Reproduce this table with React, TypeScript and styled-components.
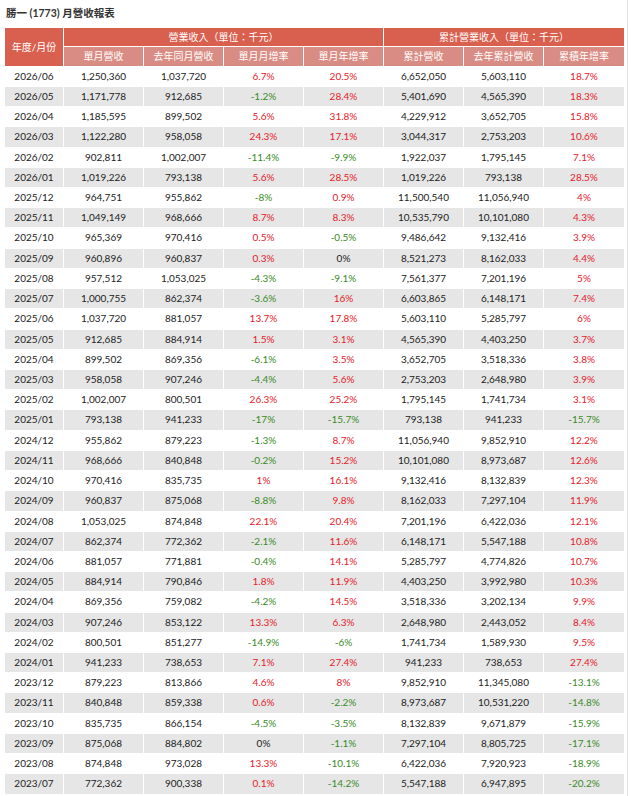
import React from "react";
import styled, { createGlobalStyle } from "styled-components";

const Global = createGlobalStyle`
  html, body { margin: 0; padding: 0; background: #fff; }
  body { font-family: Lato, "Noto Sans CJK TC", sans-serif; color: #222; }
`;

const Page = styled.div`
  width: 628px;
  min-height: 796px;
  box-sizing: border-box;
  border-right: 1px solid #e2e2e2;
  padding: 0 0 0 5px;
`;

const Title = styled.h1`
  margin: 0;
  padding: 0 0 0 1px;
  height: 28px;
  line-height: 27px;
  font-size: 10.5px;
  font-weight: 700;
  color: #333;
  font-family: Lato, "Noto Sans CJK TC", sans-serif;
`;

const Table = styled.table`
  border-collapse: separate;
  border-spacing: 0;
  table-layout: fixed;
  width: 619px;
  font-size: 10px;
`;

const HeadCell = styled.th<{ $tone: "dark" | "light" }>`
  background: ${(p) => (p.$tone === "dark" ? "#d9604f" : "#d98c83")};
  color: #fff;
  font-weight: 400;
  padding: 0;
  line-height: 18.35px;
  text-align: center;
  border-right: 1px solid #fff;
  border-bottom: 1px solid #fff;
  white-space: nowrap;
  &:last-child { border-right: none; }
`;

const Row = styled.tr<{ $alt: boolean }>`
  background: ${(p) => (p.$alt ? "#e6e6e6" : "#fff")};
`;

const Cell = styled.td<{ $tone?: "up" | "down" | "flat" }>`
  padding: 0;
  line-height: 19.22px;
  text-align: center;
  border-right: 1px solid #fff;
  border-bottom: 1px solid #fff;
  white-space: nowrap;
  color: ${(p) =>
    p.$tone === "up" ? "#e5202a" : p.$tone === "down" ? "#3a8a26" : "#222"};
  &:last-child { border-right: none; }
`;

type R = [string, string, string, string, string, string, string, string];

const rows: R[] = [
  ["2026/06", "1,250,360", "1,037,720", "6.7%", "20.5%", "6,652,050", "5,603,110", "18.7%"],
  ["2026/05", "1,171,778", "912,685", "-1.2%", "28.4%", "5,401,690", "4,565,390", "18.3%"],
  ["2026/04", "1,185,595", "899,502", "5.6%", "31.8%", "4,229,912", "3,652,705", "15.8%"],
  ["2026/03", "1,122,280", "958,058", "24.3%", "17.1%", "3,044,317", "2,753,203", "10.6%"],
  ["2026/02", "902,811", "1,002,007", "-11.4%", "-9.9%", "1,922,037", "1,795,145", "7.1%"],
  ["2026/01", "1,019,226", "793,138", "5.6%", "28.5%", "1,019,226", "793,138", "28.5%"],
  ["2025/12", "964,751", "955,862", "-8%", "0.9%", "11,500,540", "11,056,940", "4%"],
  ["2025/11", "1,049,149", "968,666", "8.7%", "8.3%", "10,535,790", "10,101,080", "4.3%"],
  ["2025/10", "965,369", "970,416", "0.5%", "-0.5%", "9,486,642", "9,132,416", "3.9%"],
  ["2025/09", "960,896", "960,837", "0.3%", "0%", "8,521,273", "8,162,033", "4.4%"],
  ["2025/08", "957,512", "1,053,025", "-4.3%", "-9.1%", "7,561,377", "7,201,196", "5%"],
  ["2025/07", "1,000,755", "862,374", "-3.6%", "16%", "6,603,865", "6,148,171", "7.4%"],
  ["2025/06", "1,037,720", "881,057", "13.7%", "17.8%", "5,603,110", "5,285,797", "6%"],
  ["2025/05", "912,685", "884,914", "1.5%", "3.1%", "4,565,390", "4,403,250", "3.7%"],
  ["2025/04", "899,502", "869,356", "-6.1%", "3.5%", "3,652,705", "3,518,336", "3.8%"],
  ["2025/03", "958,058", "907,246", "-4.4%", "5.6%", "2,753,203", "2,648,980", "3.9%"],
  ["2025/02", "1,002,007", "800,501", "26.3%", "25.2%", "1,795,145", "1,741,734", "3.1%"],
  ["2025/01", "793,138", "941,233", "-17%", "-15.7%", "793,138", "941,233", "-15.7%"],
  ["2024/12", "955,862", "879,223", "-1.3%", "8.7%", "11,056,940", "9,852,910", "12.2%"],
  ["2024/11", "968,666", "840,848", "-0.2%", "15.2%", "10,101,080", "8,973,687", "12.6%"],
  ["2024/10", "970,416", "835,735", "1%", "16.1%", "9,132,416", "8,132,839", "12.3%"],
  ["2024/09", "960,837", "875,068", "-8.8%", "9.8%", "8,162,033", "7,297,104", "11.9%"],
  ["2024/08", "1,053,025", "874,848", "22.1%", "20.4%", "7,201,196", "6,422,036", "12.1%"],
  ["2024/07", "862,374", "772,362", "-2.1%", "11.6%", "6,148,171", "5,547,188", "10.8%"],
  ["2024/06", "881,057", "771,881", "-0.4%", "14.1%", "5,285,797", "4,774,826", "10.7%"],
  ["2024/05", "884,914", "790,846", "1.8%", "11.9%", "4,403,250", "3,992,980", "10.3%"],
  ["2024/04", "869,356", "759,082", "-4.2%", "14.5%", "3,518,336", "3,202,134", "9.9%"],
  ["2024/03", "907,246", "853,122", "13.3%", "6.3%", "2,648,980", "2,443,052", "8.4%"],
  ["2024/02", "800,501", "851,277", "-14.9%", "-6%", "1,741,734", "1,589,930", "9.5%"],
  ["2024/01", "941,233", "738,653", "7.1%", "27.4%", "941,233", "738,653", "27.4%"],
  ["2023/12", "879,223", "813,866", "4.6%", "8%", "9,852,910", "11,345,080", "-13.1%"],
  ["2023/11", "840,848", "859,338", "0.6%", "-2.2%", "8,973,687", "10,531,220", "-14.8%"],
  ["2023/10", "835,735", "866,154", "-4.5%", "-3.5%", "8,132,839", "9,671,879", "-15.9%"],
  ["2023/09", "875,068", "884,802", "0%", "-1.1%", "7,297,104", "8,805,725", "-17.1%"],
  ["2023/08", "874,848", "973,028", "13.3%", "-10.1%", "6,422,036", "7,920,923", "-18.9%"],
  ["2023/07", "772,362", "900,338", "0.1%", "-14.2%", "5,547,188", "6,947,895", "-20.2%"],
];

const toneOf = (v: string): "up" | "down" | "flat" => {
  const n = parseFloat(v);
  if (n > 0) return "up";
  if (n < 0) return "down";
  return "flat";
};

const Col = styled.col<{ $w: number }>`
  width: ${(p) => p.$w}px;
`;

export default function App() {
  return (
    <>
      <Global />
      <Page>
        <Title>勝一 (1773) 月營收報表</Title>
        <Table>
          <colgroup>
            <Col $w={59} />
            {Array.from({ length: 7 }).map((_, i) => (
              <Col key={i} $w={80} />
            ))}
          </colgroup>
          <thead>
            <tr>
              <HeadCell $tone="dark" rowSpan={2}>年度/月份</HeadCell>
              <HeadCell $tone="dark" colSpan={4}>營業收入（單位：千元）</HeadCell>
              <HeadCell $tone="dark" colSpan={3}>累計營業收入（單位：千元）</HeadCell>
            </tr>
            <tr>
              <HeadCell $tone="light">單月營收</HeadCell>
              <HeadCell $tone="light">去年同月營收</HeadCell>
              <HeadCell $tone="light">單月月增率</HeadCell>
              <HeadCell $tone="light">單月年增率</HeadCell>
              <HeadCell $tone="light">累計營收</HeadCell>
              <HeadCell $tone="light">去年累計營收</HeadCell>
              <HeadCell $tone="light">累積年增率</HeadCell>
            </tr>
          </thead>
          <tbody>
            {rows.map((r, i) => (
              <Row key={r[0]} $alt={i % 2 === 1}>
                <Cell>{r[0]}</Cell>
                <Cell>{r[1]}</Cell>
                <Cell>{r[2]}</Cell>
                <Cell $tone={toneOf(r[3])}>{r[3]}</Cell>
                <Cell $tone={toneOf(r[4])}>{r[4]}</Cell>
                <Cell>{r[5]}</Cell>
                <Cell>{r[6]}</Cell>
                <Cell $tone={toneOf(r[7])}>{r[7]}</Cell>
              </Row>
            ))}
          </tbody>
        </Table>
      </Page>
    </>
  );
}
